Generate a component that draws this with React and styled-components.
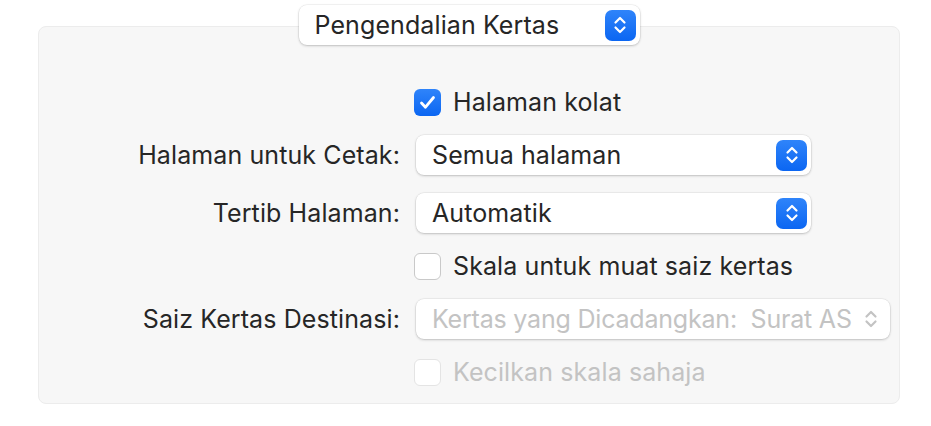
import React from "react";
import styled, { createGlobalStyle } from "styled-components";

const Global = createGlobalStyle`
  html, body {
    margin: 0;
    background: #ffffff;
    font-family: Inter, "Noto Sans", "Liberation Sans", sans-serif;
    -webkit-font-smoothing: antialiased;
  }
`;

const Page = styled.div`
  width: 931px;
  height: 426px;
  padding-top: 5px;
  box-sizing: border-box;
`;

const Header = styled.div`
  position: relative;
  z-index: 1;
  display: flex;
  justify-content: center;
  width: 862px;
  margin-left: 38px;
`;

const Panel = styled.div`
  width: 862px;
  margin-left: 38px;
  margin-top: -19px;
  box-sizing: border-box;
  background: #f7f7f7;
  border: 1px solid #ececec;
  border-radius: 8px;
  padding: 60px 0 16px;
  display: grid;
  grid-template-columns: 361px 1fr;
  column-gap: 16px;
  row-gap: 18px;
  align-items: center;
`;

const Label = styled.div`
  grid-column: 1;
  justify-self: end;
  font-size: 25px;
  color: #262626;
  letter-spacing: 0.1px;
`;

const Cell = styled.div`
  grid-column: 2;
  display: flex;
  align-items: center;
  height: ${(p) => (p.$tall ? 40 : 30)}px;
`;

const Popup = styled.div`
  width: ${(p) => p.$width}px;
  height: 40px;
  box-sizing: border-box;
  display: flex;
  align-items: center;
  justify-content: space-between;
  padding: 0 4px 0 16px;
  background: #ffffff;
  border-radius: 8px;
  box-shadow: 0 0 0 0.5px rgba(0, 0, 0, 0.08), 0 1px 2.5px rgba(0, 0, 0, 0.2);
  font-size: 25px;
  letter-spacing: ${(p) => (p.$disabled ? "-0.2px" : "0.1px")};
  color: ${(p) => (p.$disabled ? "#c3c3c3" : "#262626")};
  white-space: pre;
`;

const Stepper = styled.div`
  width: 31px;
  height: 31px;
  border-radius: 7px;
  display: flex;
  align-items: center;
  justify-content: center;
  background: ${(p) => (p.$disabled ? "transparent" : "linear-gradient(#2f84fa, #0b66f2)")};
  color: ${(p) => (p.$disabled ? "#c3c3c3" : "#ffffff")};
`;

const Check = styled.label`
  display: flex;
  align-items: center;
  gap: 12px;
  margin-left: -2px;
  font-size: 25px;
  letter-spacing: 0.1px;
  color: ${(p) => (p.$disabled ? "#c3c3c3" : "#262626")};
`;

const Box = styled.span`
  width: 27px;
  height: 27px;
  box-sizing: border-box;
  border-radius: 6px;
  display: flex;
  align-items: center;
  justify-content: center;
  background: ${(p) => (p.$checked ? "linear-gradient(#2f84fa, #0b66f2)" : "#ffffff")};
  border: ${(p) =>
    p.$checked ? "none" : p.$disabled ? "1px solid #e4e4e4" : "1px solid #c9c9c9"};
`;

const Chevrons = () => (
  <svg width="14" height="20" viewBox="0 0 14 20" fill="none">
    <path d="M2.5 7.5 L7 3 L11.5 7.5" stroke="currentColor" strokeWidth="2.2" strokeLinecap="round" strokeLinejoin="round" />
    <path d="M2.5 12.5 L7 17 L11.5 12.5" stroke="currentColor" strokeWidth="2.2" strokeLinecap="round" strokeLinejoin="round" />
  </svg>
);

const Tick = () => (
  <svg width="17" height="15" viewBox="0 0 17 15" fill="none">
    <path d="M2.5 8 L6.5 12.2 L14.5 2.5" stroke="#ffffff" strokeWidth="2.8" strokeLinecap="round" strokeLinejoin="round" />
  </svg>
);

const Select = ({ width, value, disabled }) => (
  <Popup $width={width} $disabled={disabled}>
    <span>{value}</span>
    <Stepper $disabled={disabled}>
      <Chevrons />
    </Stepper>
  </Popup>
);

const Checkbox = ({ label, checked, disabled }) => (
  <Check $disabled={disabled}>
    <Box $checked={checked} $disabled={disabled}>{checked && <Tick />}</Box>
    {label}
  </Check>
);

export default function App() {
  return (
    <Page>
      <Global />
      <Header>
        <Select width={341} value="Pengendalian Kertas" />
      </Header>
      <Panel>
        <Cell>
          <Checkbox label="Halaman kolat" checked />
        </Cell>

        <Label>Halaman untuk Cetak:</Label>
        <Cell $tall>
          <Select width={395} value="Semua halaman" />
        </Cell>

        <Label>Tertib Halaman:</Label>
        <Cell $tall>
          <Select width={395} value="Automatik" />
        </Cell>

        <Cell>
          <Checkbox label="Skala untuk muat saiz kertas" />
        </Cell>

        <Label>Saiz Kertas Destinasi:</Label>
        <Cell $tall>
          <Select width={474} value="Kertas yang Dicadangkan:  Surat AS" disabled />
        </Cell>

        <Cell>
          <Checkbox label="Kecilkan skala sahaja" disabled />
        </Cell>
      </Panel>
    </Page>
  );
}
